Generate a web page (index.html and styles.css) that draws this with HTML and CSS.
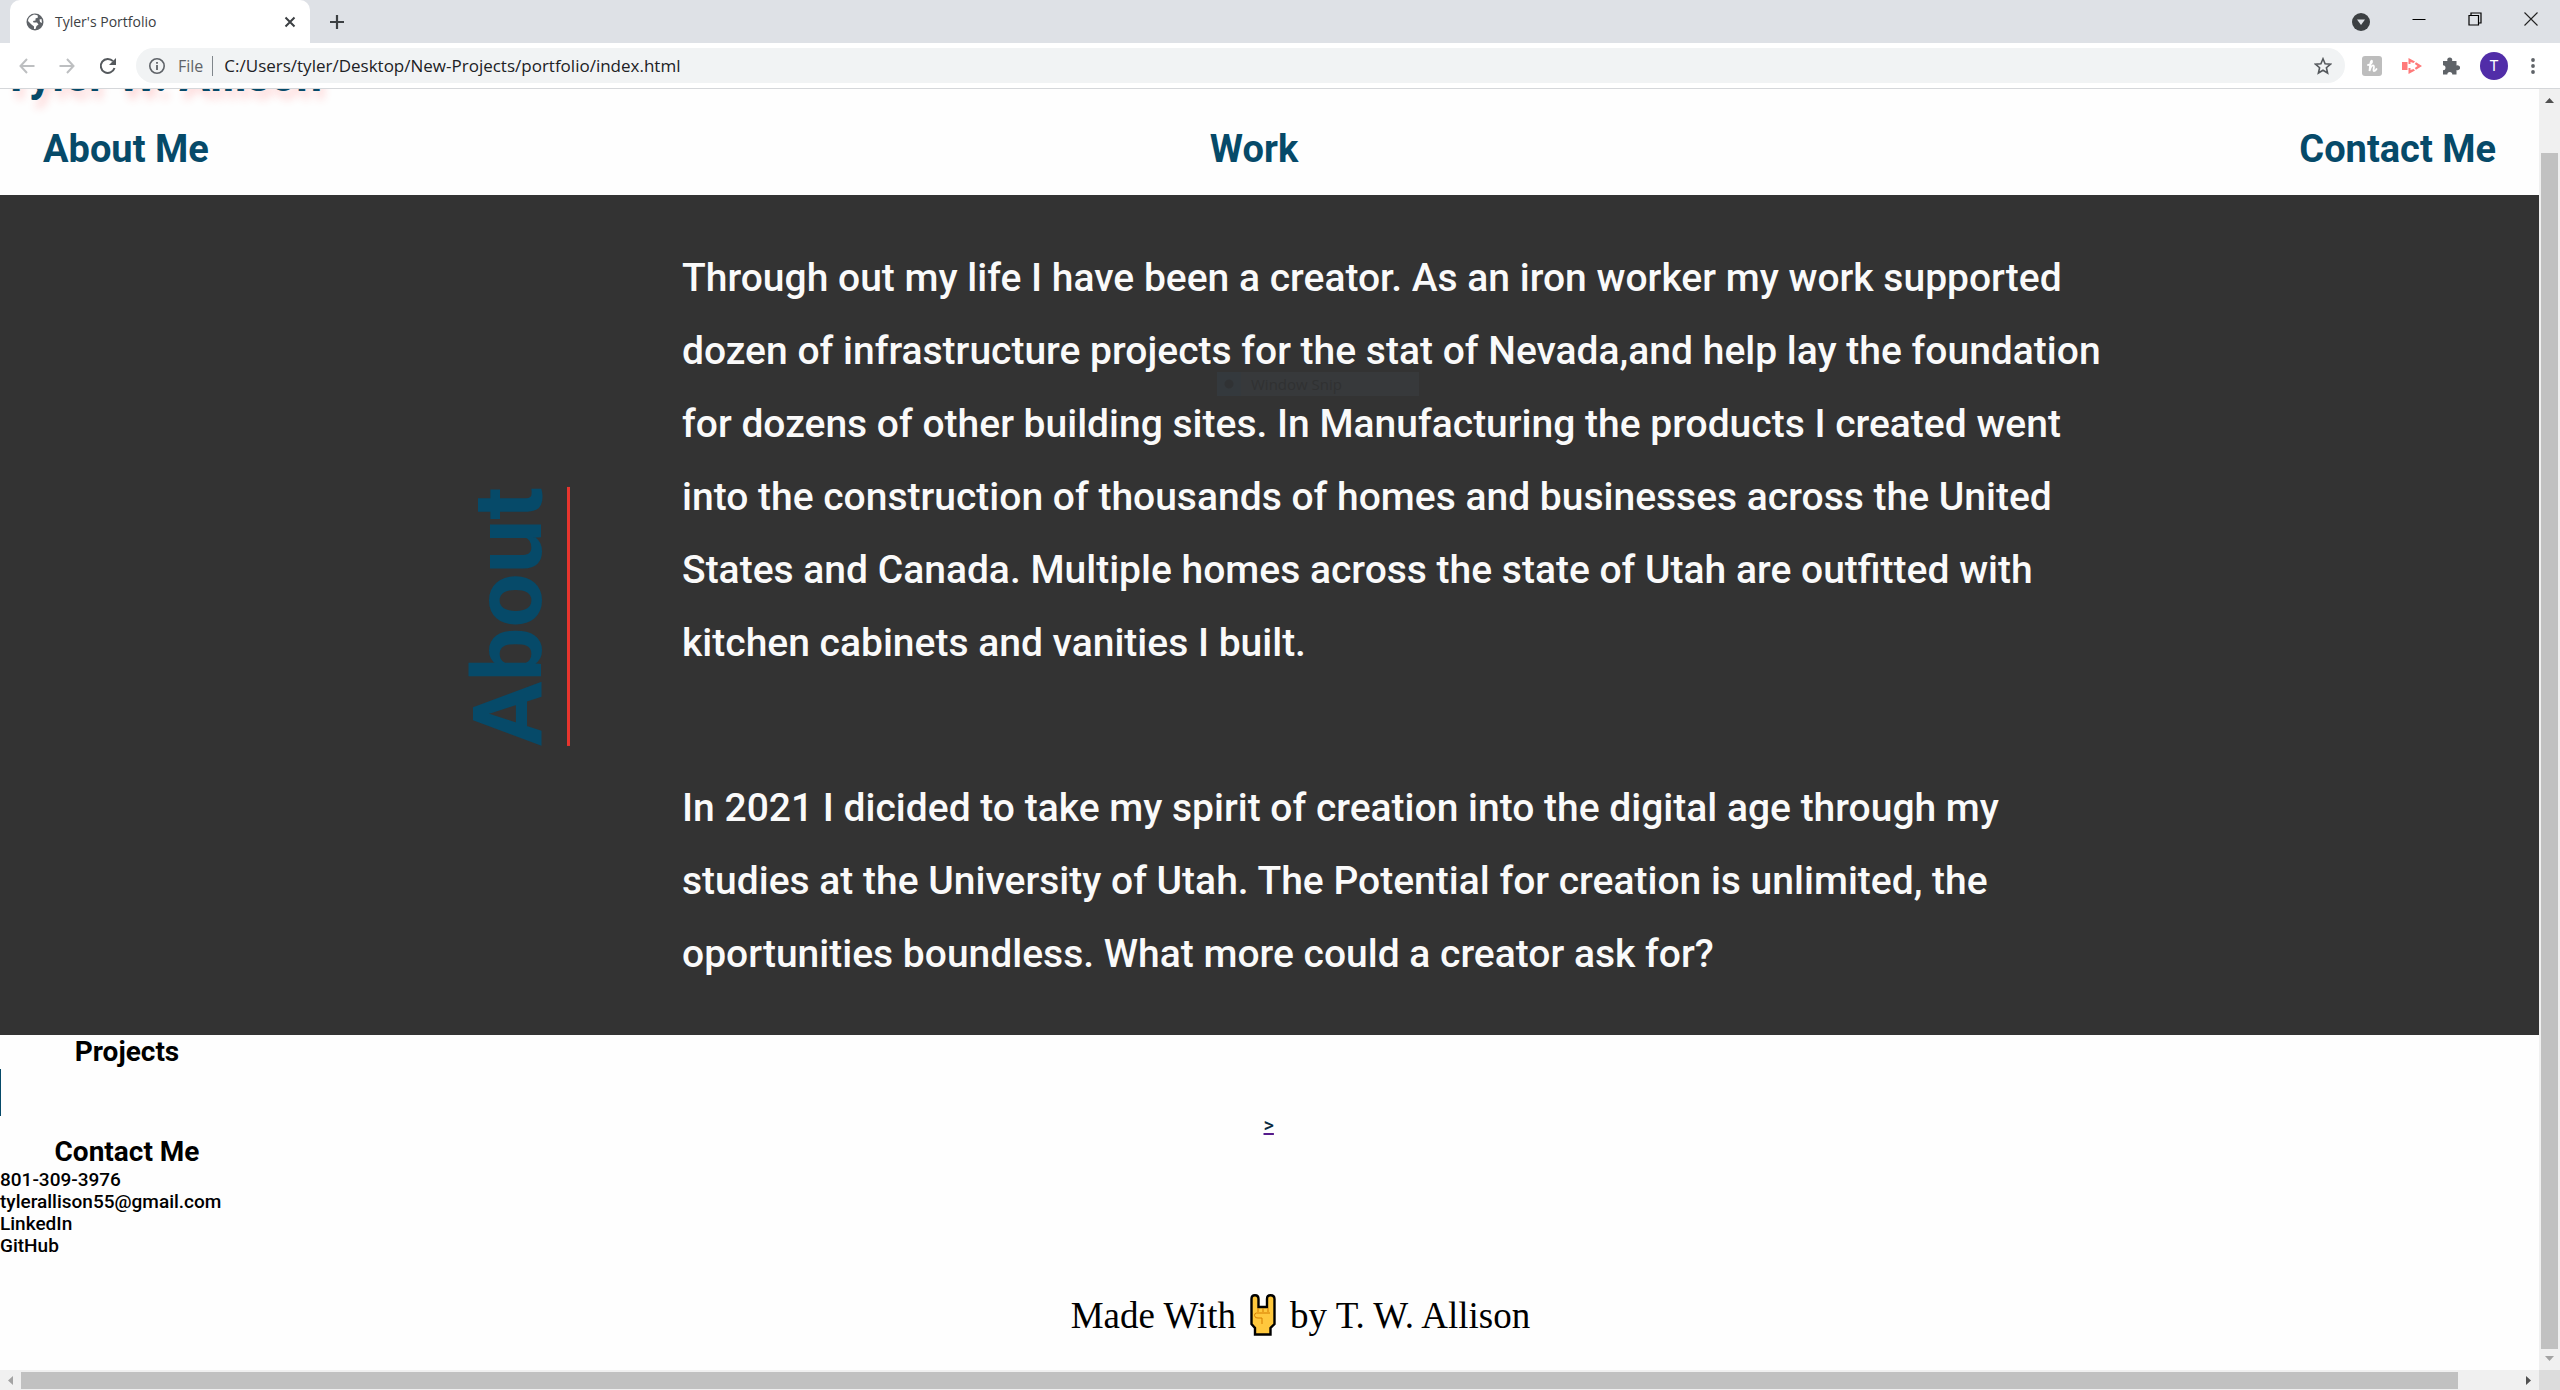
FILE: index.html
```html
<!DOCTYPE html>
<html lang="en">
<head>
<meta charset="utf-8">
<title>Tyler's Portfolio</title>
<link rel="stylesheet" href="styles.css">
</head>
<body>
<div class="tabstrip">
  <div class="tab">
    <svg class="globe" viewBox="0 0 18 18" width="18" height="18"><circle cx="9" cy="9" r="8.5" fill="#5f6368"/><path d="M8 1.5 L11.5 2.2 L12 4.5 L9.5 5.5 L9.5 7.5 L7 8 L7.5 9.5 L11 9.5 L12.5 11.5 L10.5 13 L9.5 16 L8 16 L8 13.5 L5.500 11.500 L2 8 Q2 3.500 8 1.500Z M13.500 6.500 L15.500 6 L16 10 L14 9Z" fill="#fff"/></svg>
    <span class="tab-title">Tyler's Portfolio</span>
    <button class="icon-btn" aria-label="Close tab"><svg viewBox="0 0 12 12" width="12" height="12"><path d="M1.500 1.500 L10.500 10.500 M10.500 1.500 L1.500 10.500" stroke="#3c4043" stroke-width="2"/></svg></button>
  </div>
  <button class="icon-btn new-tab" aria-label="New tab"><svg viewBox="0 0 16 16" width="16" height="16"><path d="M8 1 V15 M1 8 H15" stroke="#3c4043" stroke-width="2.200"/></svg></button>
  <div class="window-controls">
    <button class="icon-btn low" aria-label="Search tabs"><svg viewBox="0 0 18 18" width="18" height="18"><circle cx="9" cy="9" r="9" fill="#3c4043"/><path d="M5 6.500 H13 L9 12Z" fill="#dee1e6"/></svg></button>
    <button class="icon-btn" aria-label="Minimize"><svg viewBox="0 0 14 14" width="14" height="14"><path d="M0.500 7.500 H13.500" stroke="#000"/></svg></button>
    <button class="icon-btn" aria-label="Restore"><svg viewBox="0 0 14 14" width="14" height="14"><path d="M1 3.500 H10.500 V13 H1Z M3 3.500 V1 H13 V11 H10.500" fill="none" stroke="#000" stroke-width="1.200"/></svg></button>
    <button class="icon-btn" aria-label="Close"><svg viewBox="0 0 14 14" width="14" height="14"><path d="M0.500 0.500 L13.500 13.500 M13.500 0.500 L0.500 13.500" stroke="#222" stroke-width="1.100"/></svg></button>
  </div>
</div>
<div class="toolbar">
  <div class="nav-buttons">
    <button class="icon-btn" aria-label="Back"><svg viewBox="0 0 16 16" width="16" height="16"><path d="M15.500 8 H1.500 M8 1 L1.500 8 L8 15" fill="none" stroke="#bdbfc1" stroke-width="2"/></svg></button>
    <button class="icon-btn" aria-label="Forward"><svg viewBox="0 0 16 16" width="16" height="16"><path d="M0.500 8 H14.500 M8 1 L14.500 8 L8 15" fill="none" stroke="#bdbfc1" stroke-width="2"/></svg></button>
    <button class="icon-btn" aria-label="Reload"><svg viewBox="0 0 18 18" width="18" height="18"><path d="M15.500 11 A7 7 0 1 1 14 4.200" fill="none" stroke="#55595d" stroke-width="2"/><path d="M17 1 V8 H10Z" fill="#55595d"/></svg></button>
  </div>
  <div class="address">
    <svg viewBox="0 0 16 16" width="16" height="16"><circle cx="8" cy="8" r="7.200" fill="none" stroke="#5f6368" stroke-width="1.600"/><path d="M8 7 V12 M8 4 V5.800" stroke="#5f6368" stroke-width="1.800"/></svg>
    <span class="scheme">File</span>
    <input class="url" type="text" aria-label="Address" value="C:/Users/tyler/Desktop/New-Projects/portfolio/index.html">
    <button class="icon-btn" aria-label="Bookmark"><svg viewBox="0 0 18 18" width="18" height="18"><path d="M9 1.800 L11.100 6.700 L16.500 7.200 L12.400 10.700 L13.600 16 L9 13.200 L4.400 16 L5.600 10.700 L1.500 7.200 L6.900 6.700Z" fill="none" stroke="#55595d" stroke-width="1.600"/></svg></button>
  </div>
  <div class="extensions">
    <button class="icon-btn" aria-label="Honey"><svg viewBox="0 0 20 20" width="20" height="20"><rect width="20" height="20" rx="3" fill="#bdbdbd"/><path d="M6 9 C8 9 10.500 7 10 5 C9 3.500 8 8 7.500 15 C8.500 11 10 9 11.500 9.500 C13 10 10.500 15 12 15 Q13.500 15 14.500 13" fill="none" stroke="#fff" stroke-width="1.800" stroke-linecap="round"/></svg></button>
    <button class="icon-btn" aria-label="Screencastify"><svg viewBox="0 0 20 16" width="20" height="16"><path d="M0 4 H5.500 V12 H0Z M6.500 0 L13 3.500 L11.500 5 L8.500 4 V6 H6.500Z M6.500 16 L13 12.500 L11.500 11 L8.500 12 V10 H6.500Z M14 4.200 L20 8 L14 11.800 L12.800 10 L15.500 8 L12.800 6Z" fill="#ff7a7a"/></svg></button>
    <button class="icon-btn" aria-label="Extensions"><svg viewBox="0 0 18 18" width="18" height="18"><path d="M1 4 H5.500 A2.500 2.500 0 1 1 10 4 H14.500 V8.500 A2.500 2.500 0 1 1 14.500 13 V17.500 H10.300 A2.500 2.500 0 0 0 5.300 17.500 H1 V13.300 A2.500 2.500 0 0 0 1 8.300Z" fill="#5f6368"/></svg></button>
    <button class="avatar" aria-label="Profile">T</button>
    <button class="icon-btn menu" aria-label="Menu"><svg viewBox="0 0 4 16" width="4" height="16"><circle cx="2" cy="2" r="1.900" fill="#5f6368"/><circle cx="2" cy="8" r="1.900" fill="#5f6368"/><circle cx="2" cy="14" r="1.900" fill="#5f6368"/></svg></button>
  </div>
</div>
<div class="viewport">
  <div class="page">
    <header>
      <h1>Tyler W. Allison</h1>
      <nav>
        <a href="#about">About Me</a>
        <a href="#work">Work</a>
        <a href="#contact">Contact Me</a>
      </nav>
    </header>
    <section class="about" id="about">
      <h2>About</h2>
      <div class="bio">
        <p>Through out my life I have been a creator. As an iron worker my work supported<br>dozen of infrastructure projects for the stat of Nevada,and help lay the foundation<br>for dozens of other building sites. In Manufacturing the products I created went<br>into the construction of thousands of homes and businesses across the United<br>States and Canada. Multiple homes across the state of Utah are outfitted with<br>kitchen cabinets and vanities I built.</p>
        <p>In 2021 I dicided to take my spirit of creation into the digital age through my<br>studies at the University of Utah. The Potential for creation is unlimited, the<br>oportunities boundless. What more could a creator ask for?</p>
      </div>
      <div class="snip"><span class="snip-icon"></span><span>Window Snip</span></div>
    </section>
    <section class="work" id="work">
      <h3>Projects</h3>
      <div class="project-edge"></div>
      <a class="next" href="#next"><span>&gt;</span></a>
    </section>
    <section class="contact" id="contact">
      <h3>Contact Me</h3>
      <ul>
        <li>801-309-3976</li>
        <li>tylerallison55@gmail.com</li>
        <li>LinkedIn</li>
        <li>GitHub</li>
      </ul>
    </section>
    <footer>
      <span>Made With</span>
      <svg viewBox="0 0 26 42" width="26" height="42" aria-label="horns"><path d="M1.500 5 Q1.500 1.200 5 1.200 Q8.500 1.200 8.500 5 V13 H17 V5 Q17 1.200 20.500 1.200 Q24.500 1.200 24.500 5 V30 L20.500 34 V40.500 H5 V34 L1.500 30Z" fill="#ffc83d" stroke="#000" stroke-width="2.400"/><path d="M8 14 V18 M13 14 V18 M18 14 V18 M20 19 H6.500 Q4.500 19 4.500 21.500 Q5 24.500 8 24 H12 V30" fill="none" stroke="#d67d00" stroke-width="1"/></svg>
      <span>by T. W. Allison</span>
    </footer>
  </div>
  <div class="scroll-v">
    <svg viewBox="0 0 9 5" width="9" height="5"><path d="M0 5 L4.500 0 L9 5Z" fill="#505050"/></svg>
    <div class="thumb"></div>
    <svg viewBox="0 0 9 5" width="9" height="5"><path d="M0 0 L4.500 5 L9 0Z" fill="#a3a3a3"/></svg>
  </div>
  <div class="scroll-h">
    <svg viewBox="0 0 5 9" width="5" height="9"><path d="M5 0 L0 4.500 L5 9Z" fill="#a3a3a3"/></svg>
    <div class="thumb"></div>
    <svg viewBox="0 0 5 9" width="5" height="9"><path d="M0 0 L5 4.500 L0 9Z" fill="#505050"/></svg>
  </div>
  <div class="corner"></div>
</div>
</body>
</html>
```

FILE: styles.css
```css
* { box-sizing: border-box; margin: 0; padding: 0; }
body {
  display: flex;
  flex-direction: column;
  height: 100vh;
  overflow: hidden;
  background: #fff;
  font-family: Roboto, "Liberation Sans", sans-serif;
}
button { border: 0; background: none; }
svg { display: block; flex: none; }
.icon-btn { display: grid; place-items: center; flex: none; }

/* Browser frame */
.tabstrip {
  display: flex;
  align-items: center;
  height: 43px;
  padding-left: 10px;
  background: #dee1e6;
  font-family: "Open Sans", sans-serif;
}
.tab {
  display: flex;
  align-items: center;
  gap: 11px;
  width: 300px;
  height: 43px;
  padding: 0 14px 0 16px;
  border-radius: 10px 10px 0 0;
  background: #fff;
}
.tab-title { flex: 1; font-size: 14px; color: #3c4043; }
.new-tab { margin-left: 19px; }
.window-controls {
  display: flex;
  align-items: center;
  gap: 42px;
  margin-left: auto;
  padding: 0 22px 6px 0;
}
.low { padding-top: 6px; }
.toolbar {
  display: flex;
  align-items: center;
  height: 46px;
  padding: 0 25px 0 19px;
  border-bottom: 1px solid #d5d7da;
  font-family: "Open Sans", sans-serif;
}
.nav-buttons { display: flex; gap: 24px; width: 117px; }
.address {
  display: flex;
  align-items: center;
  flex: 1;
  height: 35px;
  padding: 0 13px;
  border-radius: 18px;
  background: #f1f3f4;
  font-size: 16px;
}
.scheme {
  margin-left: 13px;
  padding-right: 9px;
  border-right: 1px solid #80868b;
  line-height: 20px;
  color: #5f6368;
}
.url {
  flex: 1;
  margin-left: 11px;
  border: 0;
  background: none;
  font: inherit;
  font-size: 17px;
  color: #202124;
}
.extensions { display: flex; align-items: center; gap: 20px; margin-left: 17px; }
.menu { margin-left: 3px; }
.avatar {
  width: 28px;
  height: 28px;
  border-radius: 50%;
  background: #512da8;
  color: #fff;
  font: 15px/28px Roboto, sans-serif;
}

/* Viewport with its scroll bars */
.viewport {
  display: grid;
  grid-template: minmax(0, 1fr) 20px / minmax(0, 1fr) 21px;
  flex: 1;
  min-height: 0;
}
.page { overflow: hidden; background: #fefefe; }
.scroll-v, .scroll-h {
  display: flex;
  align-items: center;
  background: #f0f0f0;
}
.scroll-v { flex-direction: column; padding: 9px 0; }
.scroll-h { padding: 0 8px; }
.thumb { flex: 1; background: #c1c1c1; }
.scroll-v .thumb { width: 17px; margin: 50px 0 7px; }
.scroll-h .thumb { height: 17px; margin: 0 68px 0 8px; }
.corner { background: #dcdcdc; }

/* Portfolio page */
h1 {
  height: 10px;
  padding-left: 2px;
  font-size: 46px;
  line-height: 52px;
  margin-top: -40px;
  margin-bottom: 30px;
  color: #064a69;
  text-shadow: 4px 8px 8px rgba(255, 60, 60, 0.2);
}
nav {
  display: flex;
  justify-content: space-between;
  padding: 38px 43px 24px;
}
nav a {
  font-size: 38px;
  line-height: 44px;
  font-weight: 700;
  color: #064a69;
  text-decoration: none;
}
.about {
  position: relative;
  display: flex;
  align-items: center;
  padding: 47px 18% 44px;
  background: #333;
}
.about h2 {
  flex: none;
  width: 113px;
  writing-mode: vertical-rl;
  transform: rotate(180deg);
  border-left: 3px solid #e8352e;
  padding-left: 4px;
  font-size: 96px;
  line-height: 102px;
  color: #064a69;
}
.bio { margin-left: 112px; font-size: 39px; line-height: 73px; font-weight: 500; color: #fafafa; white-space: nowrap; }
.bio p + p { margin-top: 92px; }
.snip {
  position: absolute;
  top: 177px;
  left: 1217px;
  display: flex;
  align-items: center;
  gap: 10px;
  width: 202px;
  height: 24px;
  background: #37393b;
  color: #303132;
  font: 15px/24px "Open Sans", sans-serif;
}
.snip-icon { width: 24px; height: 24px; background: radial-gradient(circle, #303234 4px, #34393d 5px); }
h3 { width: 254px; font-size: 28px; line-height: 34px; text-align: center; color: #000; }
.project-edge { width: 1px; height: 47px; background: #064a69; }
.next {
  display: block;
  width: 12px;
  margin: 0 auto;
  font-size: 20px;
  line-height: 19px;
  font-weight: 500;
  color: #551a8b;
}
.next span { color: #0a2a40; }
ul { list-style: none; font-size: 19px; line-height: 22px; font-weight: 500; color: #000; }
footer {
  display: flex;
  justify-content: center;
  gap: 14px;
  margin-top: 37px;
  padding-left: 62px;
  font: 37px/44px "Liberation Serif", serif;
  color: #000;
}
```
